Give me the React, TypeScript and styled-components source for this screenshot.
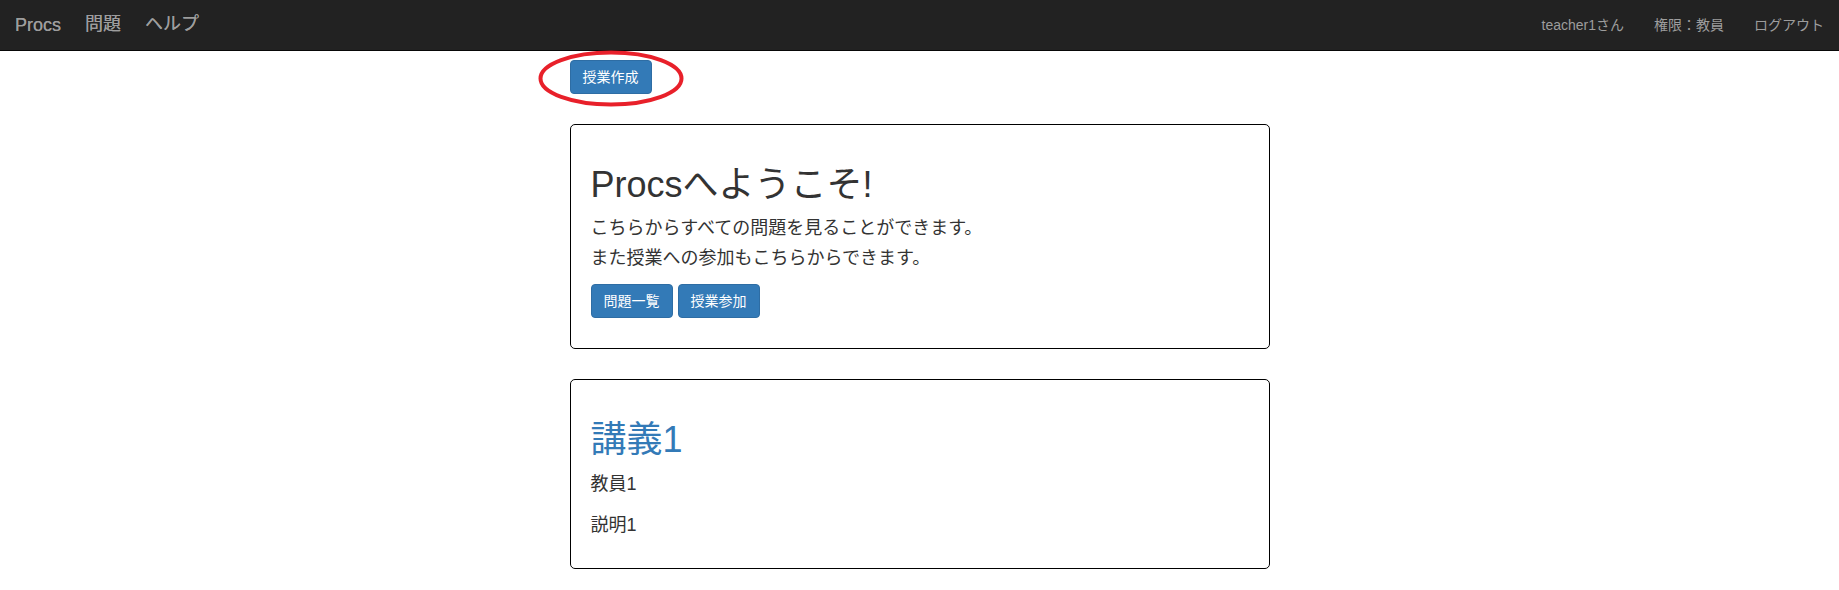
import React from 'react';
import styled, { createGlobalStyle } from 'styled-components';

const GlobalStyle = createGlobalStyle`
  body {
    margin: 0;
    background: #fff;
    color: #333;
    font-family: "Liberation Sans", "Noto Sans CJK JP", sans-serif;
    font-size: 14px;
    line-height: 1.42857;
  }
  * {
    box-sizing: border-box;
  }
`;

const Navbar = styled.nav`
  display: flex;
  align-items: center;
  justify-content: space-between;
  height: 51px;
  padding: 0 15px;
  background: #222;
  border-bottom: 1px solid #080808;
`;

const NavGroup = styled.ul<{ $gap: number }>`
  display: flex;
  align-items: center;
  gap: ${(props) => props.$gap}px;
  margin: 0;
  padding: 0;
  list-style: none;
`;

const NavLink = styled.a<{ $large?: boolean }>`
  color: #9d9d9d;
  font-size: ${(props) => (props.$large ? '18px' : '14px')};
  line-height: 20px;
  text-decoration: none;
  cursor: pointer;
  ${(props) => (props.$large ? 'text-shadow: 0 0 0.6px #9d9d9d;' : '')}
`;

const Brand = styled(NavLink)`
  margin-left: 0;
`;

const Main = styled.main`
  width: 700px;
  margin: 0 auto;
  padding-top: 9px;
`;

const Toolbar = styled.div`
  display: flex;
  margin-bottom: 30px;
`;

const Highlight = styled.div`
  position: relative;
`;

const Ring = styled.svg`
  position: absolute;
  left: -32px;
  top: -10px;
  pointer-events: none;
`;

const Button = styled.button`
  display: inline-block;
  height: 34px;
  padding: 6px 12px;
  font-family: inherit;
  font-size: 14px;
  line-height: 20px;
  color: #fff;
  background: #337ab7;
  border: 1px solid #2e6da4;
  border-radius: 4px;
  cursor: pointer;
`;

const Card = styled.section`
  border: 1px solid #000;
  border-radius: 5px;
  padding: 20px;
  margin-bottom: 30px;
`;

const Title = styled.h1<{ $link?: boolean }>`
  margin: 20px 0 10px;
  font-size: 36px;
  font-weight: 400;
  line-height: 1.1;
  color: ${(props) => (props.$link ? '#337ab7' : '#333')};
`;

const Lead = styled.div`
  margin-top: -2px;
  font-size: 18px;
  line-height: 30.5px;
`;

const Actions = styled.div`
  display: flex;
  gap: 5px;
  margin: 10px 0 10px;
`;

const Details = styled.div`
  padding-top: 3px;
`;

const Detail = styled.p<{ $last?: boolean }>`
  margin: 0 0 ${(props) => (props.$last ? '9px' : '15px')};
  font-size: 18px;
  line-height: 25.7px;
`;

const App: React.FC = () => {
  return (
    <>
      <GlobalStyle />
      <Navbar>
        <NavGroup $gap={24}>
          <Brand $large>Procs</Brand>
          <li>
            <NavLink $large>問題</NavLink>
          </li>
          <li>
            <NavLink $large>ヘルプ</NavLink>
          </li>
        </NavGroup>
        <NavGroup $gap={30}>
          <li>
            <NavLink>teacher1さん</NavLink>
          </li>
          <li>
            <NavLink>権限：教員</NavLink>
          </li>
          <li>
            <NavLink>ログアウト</NavLink>
          </li>
        </NavGroup>
      </Navbar>
      <Main>
        <Toolbar>
          <Highlight>
            <Button>授業作成</Button>
            <Ring width="146" height="57" viewBox="0 0 146 57">
              <ellipse cx="73" cy="28.5" rx="70.5" ry="26" fill="none" stroke="#e8202a" strokeWidth="4" />
            </Ring>
          </Highlight>
        </Toolbar>
        <Card>
          <Title>Procsへようこそ!</Title>
          <Lead>
            こちらからすべての問題を見ることができます。
            <br />
            また授業への参加もこちらからできます。
          </Lead>
          <Actions>
            <Button>問題一覧</Button>
            <Button>授業参加</Button>
          </Actions>
        </Card>
        <Card>
          <Title $link>講義1</Title>
          <Details>
            <Detail>教員1</Detail>
            <Detail $last>説明1</Detail>
          </Details>
        </Card>
      </Main>
    </>
  );
};

export default App;
